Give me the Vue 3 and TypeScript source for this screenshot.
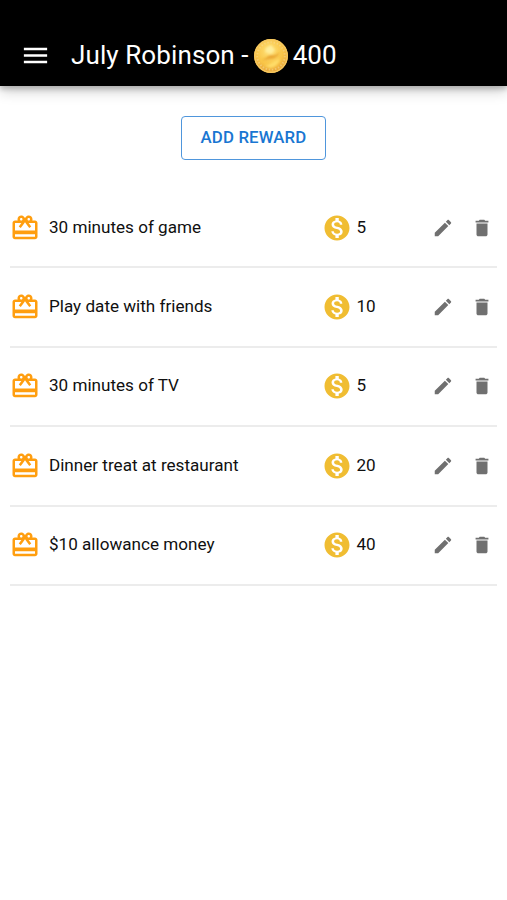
<script setup lang="ts">
interface Reward {
  title: string
  cost: number
}

const rewards: Reward[] = [
  { title: '30 minutes of game', cost: 5 },
  { title: 'Play date with friends', cost: 10 },
  { title: '30 minutes of TV', cost: 5 },
  { title: 'Dinner treat at restaurant', cost: 20 },
  { title: '$10 allowance money', cost: 40 },
]
</script>

<template>
  <div class="screen">
    <header class="bar">
      <svg class="menu" viewBox="0 0 24 24"><path d="M3 18h18v-2H3v2zm0-5h18v-2H3v2zm0-7v2h18V6H3z" /></svg>
      <h1 class="title">
        <span class="name">July Robinson -</span>
        <svg class="coin" viewBox="0 0 36 36">
          <defs>
            <radialGradient id="gold" cx="0.46" cy="0.35" r="0.65">
              <stop offset="0" stop-color="#ffe27a" />
              <stop offset="0.6" stop-color="#f9c548" />
              <stop offset="1" stop-color="#e8a438" />
            </radialGradient>
            <filter id="soften"><feGaussianBlur stdDeviation="0.9" /></filter>
          </defs>
          <circle cx="18" cy="18" r="17" fill="url(#gold)" />
          <circle cx="18" cy="18" r="16.2" fill="none" stroke="#f6c860" stroke-width="1.4" />
          <circle cx="18" cy="18" r="13.8" fill="none" stroke="#f8dc9c" stroke-width="2" stroke-dasharray="1.5 1.7" opacity="0.5" />
          <g filter="url(#soften)">
            <path d="M9 21c4 1 6-5 10-4 3 1 5-1 8-3-2 4-5 7-9 7-4 0-6 2-9 0z" fill="#e39a25" opacity="0.75" />
            <path d="M13 10l5-3 4 5-4 4-6-2z" fill="#fff0a0" opacity="0.9" />
            <path d="M11 27c6 1 9-5 16-6-1 5-6 9-10 9z" fill="#ffdf6c" opacity="0.9" />
          </g>
        </svg>
        <span>400</span>
      </h1>
    </header>

    <main class="content">
      <button class="add" type="button">ADD REWARD</button>
      <ul class="list">
        <li v-for="reward in rewards" :key="reward.title" class="row">
          <svg class="gift" viewBox="0 0 24 24"><path d="M20 6h-2.18c.11-.31.18-.65.18-1 0-1.66-1.34-3-3-3-1.05 0-1.96.54-2.5 1.35l-.5.67-.5-.68C10.96 2.54 10.05 2 9 2 7.34 2 6 3.34 6 5c0 .35.07.69.18 1H4c-1.11 0-1.99.89-1.99 2L2 19c0 1.11.89 2 2 2h16c1.11 0 2-.89 2-2V8c0-1.11-.89-2-2-2zm-5-2c.55 0 1 .45 1 1s-.45 1-1 1-1-.45-1-1 .45-1 1-1zM9 4c.55 0 1 .45 1 1s-.45 1-1 1-1-.45-1-1 .45-1 1-1zm11 15H4v-2h16v2zm0-5H4V8h5.08L7 10.83 8.62 12 11 8.76l1-1.36 1 1.36L15.38 12 17 10.83 14.92 8H20v6z" /></svg>
          <span class="label">{{ reward.title }}</span>
          <svg class="money" viewBox="0 0 24 24"><path d="M12 2C6.48 2 2 6.48 2 12s4.48 10 10 10 10-4.48 10-10S17.52 2 12 2zm1.41 16.09V20h-2.67v-1.93c-1.71-.36-3.16-1.46-3.27-3.4h1.96c.1 1.05.82 1.87 2.65 1.87 1.96 0 2.4-.98 2.4-1.59 0-.83-.44-1.61-2.67-2.14-2.48-.6-4.18-1.62-4.18-3.67 0-1.72 1.39-2.84 3.11-3.21V4h2.67v1.95c1.86.45 2.79 1.86 2.85 3.39H14.3c-.05-1.11-.64-1.87-2.22-1.87-1.5 0-2.4.68-2.4 1.64 0 .84.65 1.39 2.67 1.91s4.18 1.39 4.18 3.91c-.01 1.83-1.38 2.83-3.12 3.16z" /></svg>
          <span class="cost">{{ reward.cost }}</span>
          <svg class="action" viewBox="0 0 24 24"><path d="M3 17.25V21h3.75L17.81 9.94l-3.75-3.75L3 17.25zM20.71 7.04c.39-.39.39-1.02 0-1.41l-2.34-2.34c-.39-.39-1.02-.39-1.41 0l-1.83 1.83 3.75 3.75 1.83-1.83z" /></svg>
          <svg class="action" viewBox="0 0 24 24"><path d="M6 19c0 1.1.9 2 2 2h8c1.1 0 2-.9 2-2V7H6v12zM19 4h-3.5l-1-1h-5l-1 1H5v2h14V4z" /></svg>
        </li>
      </ul>
    </main>
  </div>
</template>

<style>
body {
  background: #fff;
}
</style>

<style scoped>
.screen {
  min-height: 900px;
  background: #fff;
  color: #101010;
  font-family: Roboto, "Liberation Sans", sans-serif;
}

.bar {
  box-sizing: border-box;
  display: flex;
  align-items: center;
  height: 86px;
  padding: 25px 20px 0;
  background: #000;
  color: #fff;
  box-shadow: 0 3px 5px rgba(0, 0, 0, 0.2), 0 5px 13px rgba(0, 0, 0, 0.2);
}

.menu {
  width: 31px;
  height: 31px;
  fill: #fff;
}

.title {
  display: flex;
  align-items: center;
  margin: 0 0 0 20px;
  font-size: 26px;
  font-weight: 400;
  line-height: 36px;
  letter-spacing: 0.1px;
}

.title span {
  margin-top: -2px;
}

.coin {
  width: 36px;
  height: 36px;
  margin: 0 4px;
}

.content {
  padding: 30px 10px 0;
}

.add {
  display: block;
  box-sizing: border-box;
  width: 145px;
  height: 44px;
  margin: 0 auto;
  padding: 0 0 3px;
  border: 1px solid #4f96dc;
  border-radius: 4px;
  background: #fff;
  color: #1976d2;
  font-family: inherit;
  font-size: 16.8px;
  font-weight: 500;
  letter-spacing: 0.16px;
}

.list {
  margin: 29px 0 0;
  padding: 0;
  list-style: none;
}

.row {
  box-sizing: border-box;
  display: grid;
  grid-template-columns: 30px 281.5px 30px 80.5px 22px 39px;
  align-items: center;
  height: 79.4px;
  border-bottom: 2px solid #ececec;
  font-size: 17.1px;
}

.gift,
.money {
  width: 30px;
  height: 30px;
}

.gift {
  fill: #ff9e0f;
}

.money {
  fill: #f0bd32;
}

.label {
  padding: 0 0 2px 9px;
}

.cost {
  padding: 0 0 2px 5px;
}

.action {
  width: 22px;
  height: 22px;
  fill: #707070;
}

.action:last-child {
  margin-left: 17px;
}
</style>
